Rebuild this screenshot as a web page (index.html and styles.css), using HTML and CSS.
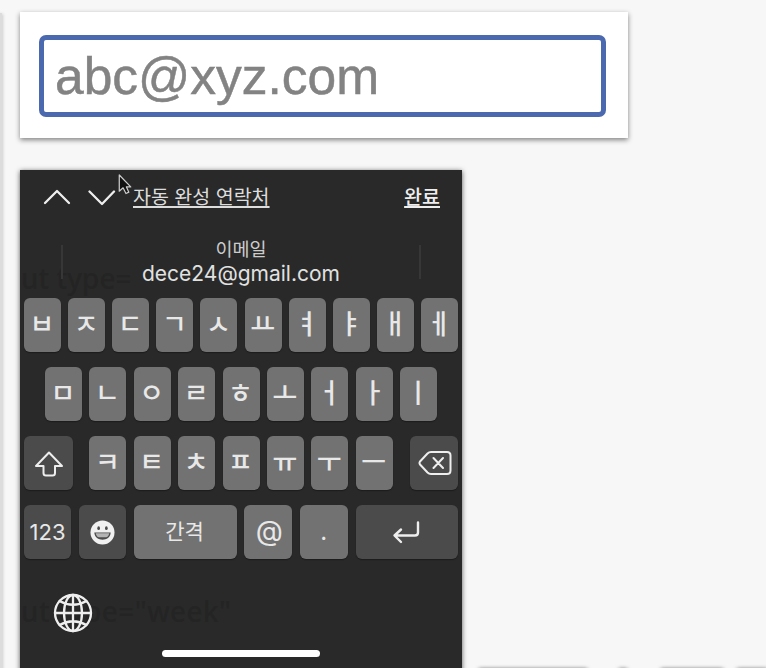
FILE: index.html
```html
<!DOCTYPE html>
<html lang="ko">
<head>
<meta charset="utf-8">
<title>이메일</title>
<link rel="stylesheet" href="styles.css">
</head>
<body>
<main class="page">
  <div class="edge"></div>
  <section class="card"><input class="email" type="email" placeholder="abc@xyz.com"></section>
  <section class="keyboard">
    <div class="ghost ghost-date">ut type=</div>
    <div class="ghost ghost-week">ut type="week"</div>
    <header class="toolbar">
      <svg class="chevron" viewBox="0 0 28 18"><path d="M2 15 14 3 26 15"/></svg>
      <svg class="chevron down" viewBox="0 0 28 18"><path d="M1.500 3.500 14 16 26 3.500"/></svg>
      <a class="autofill">자동 완성 연락처</a>
      <a class="done">완료</a>
    </header>
    <div class="suggestion"><div class="choice"><span class="label">이메일</span><span class="address">dece24@gmail.com</span></div></div>
    <div class="keys">
      <div class="row">
        <span class="key">ㅂ</span><span class="key">ㅈ</span><span class="key">ㄷ</span><span class="key">ㄱ</span><span class="key">ㅅ</span><span class="key">ㅛ</span><span class="key">ㅕ</span><span class="key">ㅑ</span><span class="key">ㅐ</span><span class="key">ㅔ</span>
      </div>
      <div class="row middle">
        <span class="key">ㅁ</span><span class="key">ㄴ</span><span class="key">ㅇ</span><span class="key">ㄹ</span><span class="key">ㅎ</span><span class="key">ㅗ</span><span class="key">ㅓ</span><span class="key">ㅏ</span><span class="key">ㅣ</span>
      </div>
      <div class="row">
        <span class="key dark shift"><svg width="30" height="28" viewBox="0 0 30 28"><path d="M15 3.500 28 17H21V24Q21 26.500 18.500 26.500H12Q9.500 26.500 9.500 24V17H2Z"/></svg></span>
        <span class="key">ㅋ</span><span class="key">ㅌ</span><span class="key">ㅊ</span><span class="key">ㅍ</span><span class="key">ㅠ</span><span class="key">ㅜ</span><span class="key">ㅡ</span>
        <span class="key dark delete"><svg width="34" height="26" viewBox="0 0 34 26"><path d="M13 2H29Q32.500 2 32.500 5.500V20.500Q32.500 24 29 24H13Q11 24 9.500 22.500L2 14.500Q1 13 2 11.500L9.500 3.500Q11 2 13 2ZM15.500 8 25 18M25 8 15.500 18"/></svg></span>
      </div>
      <div class="row">
        <span class="key dark number">123</span>
        <span class="key dark emoji"><svg width="25" height="25" viewBox="0 0 26 26"><circle cx="13" cy="13" r="12.500" fill="#f0f0f0" stroke="none"/><g fill="#4b4b4b" stroke="none"><ellipse cx="9" cy="8.500" rx="1.400" ry="2"/><ellipse cx="17" cy="8.500" rx="1.400" ry="2"/><path d="M4.500 13H21.500C21 23 5 23 4.500 13Z"/></g><path d="M6 13.800H20Q19.500 17.600 16.500 18H9.500Q6.500 17.600 6 13.800Z" fill="#b4b4b4" stroke="none"/></svg></span>
        <span class="key space">간격</span>
        <span class="key at">@</span>
        <span class="key dot">.</span>
        <span class="key dark enter"><svg width="28" height="24" viewBox="0 0 28 24"><path d="M26 2.500V12.500Q26 15.500 23 15.500H3M9 9.500 2.500 15.500 9 22"/></svg></span>
      </div>
    </div>
    <footer class="bottom">
      <svg class="globe" viewBox="0 0 40 40"><circle cx="20" cy="20" r="18"/><ellipse cx="20" cy="20" rx="9" ry="18"/><path d="M20 2V38M2 20H38M6.500 8Q20 15.500 33.500 8M6.500 32Q20 24.500 33.500 32"/></svg>
      <div class="home"></div>
    </footer>
    <svg class="cursor" viewBox="0 0 14 22"><path d="M1 1V18L5 14.500 8 20.500 11 19 8.500 13.500H13Z"/></svg>
  </section>
  <div class="next-heading"><i class="word"></i><i class="mark"></i><i class="part"></i><i class="end"></i></div>
</main>
</body>
</html>
```
FILE: styles.css
```css
* { box-sizing: border-box; }
body { margin: 0; background: #f7f7f7; font-family: Inter, "Noto Sans CJK KR", sans-serif; }
.page { position: relative; height: 668px; padding: 12px 0 0 20px; overflow: hidden; }
.edge { position: absolute; left: -10px; top: 13px; width: 12px; height: 670px; background: #dcdcdc; box-shadow: 1px 1px 3px #ccc; }
.card { width: 608px; height: 126px; padding: 23px 22px 20px 19px; background: #fff; box-shadow: 0 2px 5px rgba(0,0,0,.48); }
.email { display: block; width: 567px; height: 82px; padding: 0 11px 1px; border: 5px solid #4b69ae; border-radius: 7px; outline: 0; font: 51.5px "Liberation Sans", sans-serif; background: #fff; }
.email::placeholder { color: #838383; opacity: 1; -webkit-text-stroke: .5px #838383; }
.keyboard { position: relative; width: 442px; height: 510px; margin-top: 32px; background: #292929; box-shadow: 0 1px 5px rgba(0,0,0,.65); color: #eee; }
.ghost { position: absolute; left: 1px; color: #242424; font: 500 28px "Noto Sans", sans-serif; white-space: nowrap; }
.ghost-date { top: 89px; }
.ghost-week { top: 422px; letter-spacing: .4px; }
.toolbar { position: relative; display: flex; align-items: center; height: 56px; padding: 0 22px 3px 23px; font-size: 19.5px; }
svg { fill: none; stroke: #eee; stroke-width: 2; stroke-linecap: round; stroke-linejoin: round; }
.chevron { width: 28px; height: 18px; stroke-width: 2.3; }
.down { margin-left: 17px; }
.autofill { margin-left: 17px; text-decoration: underline; color: #ddd; }
.done { margin-left: auto; text-decoration: underline; font-weight: 500; }
.autofill, .done { position: relative; top: -1px; white-space: nowrap; text-underline-offset: 2px; text-decoration-thickness: 2px; text-decoration-skip-ink: none; }
.suggestion { position: relative; display: flex; justify-content: center; height: 72px; padding-top: 10px; }
.choice { display: flex; flex-direction: column; align-items: center; width: 359px; }
.choice::before, .choice::after { content: ""; position: absolute; top: 19px; width: 2px; height: 34px; background: #373737; }
.choice::before { left: 41px; }
.choice::after { right: 41px; }
.label { font-size: 18.5px; line-height: 26px; color: #ccc; }
.address { font-size: 21px; line-height: 24px; color: #e1e1e1; }
.keys { position: relative; display: flex; flex-direction: column; gap: 15px; padding: 0 4px; }
.row { display: flex; justify-content: space-between; height: 54px; }
.middle { padding: 0 21px; }
.key { display: flex; align-items: center; justify-content: center; width: 37px; height: 54px; border-radius: 6px; background: #727272; box-shadow: 0 1px 1px #1c1c1c; font-size: 27px; font-weight: 500; line-height: 50px; padding: 0 1px 0 0; color: #e8e8e8; }
.dark { background: #4b4b4b; }
.shift { width: 49px; margin-right: 9px; padding: 0; }
.delete { width: 48px; margin-left: 10px; padding: 0 0 0 2px; }
.number, .emoji { width: 47px; font-size: 22px; font-weight: 400; padding: 0; }
.space { width: 103px; font-size: 21px; font-weight: 400; }
.at, .dot { width: 48px; font-weight: 400; }
.at { font-size: 28px; padding: 0 0 2px 2px; }
.dot { font-size: 24px; }
.enter { width: 102px; }
.enter svg { stroke-width: 2.4; }
.bottom { position: relative; height: 121px; padding: 34px 0 0 33px; }
.globe { display: block; width: 40px; height: 40px; stroke-width: 2.3; }
.home { width: 158px; height: 7px; margin: 17px 0 0 109px; border-radius: 4px; background: #fff; }
.cursor { position: absolute; left: 98px; top: 4px; width: 14px; height: 21px; fill: #111; stroke: #ccc; stroke-width: 1.3; }
.next-heading { position: absolute; left: 479px; top: 669px; display: flex; width: 290px; height: 5px; }
.next-heading i { height: 5px; box-shadow: 0 0 4px #444; }
.word { width: 108px; }
.mark { width: 8px; margin-left: 32px; }
.part { width: 62px; margin-left: 34px; }
.end { width: 30px; margin-left: 14px; }
```
